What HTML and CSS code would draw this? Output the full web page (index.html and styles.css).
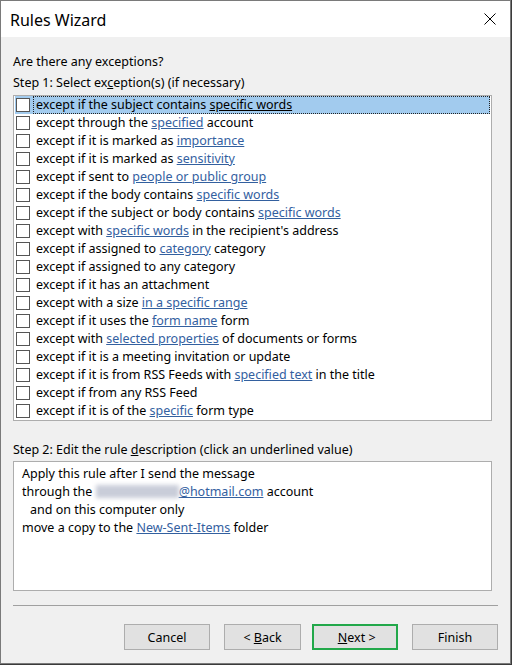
FILE: index.html
```html
<!DOCTYPE html>
<html lang="en">
<head>
    <meta charset="UTF-8">
    <title>Rules Wizard</title>
    <link rel="stylesheet" href="styles.css">
</head>
<body>
    <div class="window">
        <div class="titlebar">
            <span class="title">Rules Wizard</span>
            <svg class="close" width="12" height="12" viewBox="0 0 12 12">
                <path d="M0.5 0.5 L11.5 11.5 M11.5 0.5 L0.5 11.5" stroke="#000" stroke-width="1" fill="none"/>
            </svg>
        </div>

        <div class="content">
            <div class="line">Are there any exceptions?</div>
            <div class="line step">Step 1: Select ex<u>c</u>eption(s) (if necessary)</div>

            <div class="list">
                <div class="row selected"><span class="check"></span><span class="text">except if the subject contains <a>specific words</a></span></div>
                <div class="row"><span class="check"></span><span class="text">except through the <a>specified</a> account</span></div>
                <div class="row"><span class="check"></span><span class="text">except if it is marked as <a>importance</a></span></div>
                <div class="row"><span class="check"></span><span class="text">except if it is marked as <a>sensitivity</a></span></div>
                <div class="row"><span class="check"></span><span class="text">except if sent to <a>people or public group</a></span></div>
                <div class="row"><span class="check"></span><span class="text">except if the body contains <a>specific words</a></span></div>
                <div class="row"><span class="check"></span><span class="text">except if the subject or body contains <a>specific words</a></span></div>
                <div class="row"><span class="check"></span><span class="text">except with <a>specific words</a> in the recipient's address</span></div>
                <div class="row"><span class="check"></span><span class="text">except if assigned to <a>category</a> category</span></div>
                <div class="row"><span class="check"></span><span class="text">except if assigned to any category</span></div>
                <div class="row"><span class="check"></span><span class="text">except if it has an attachment</span></div>
                <div class="row"><span class="check"></span><span class="text">except with a size <a>in a specific range</a></span></div>
                <div class="row"><span class="check"></span><span class="text">except if it uses the <a>form name</a> form</span></div>
                <div class="row"><span class="check"></span><span class="text">except with <a>selected properties</a> of documents or forms</span></div>
                <div class="row"><span class="check"></span><span class="text">except if it is a meeting invitation or update</span></div>
                <div class="row"><span class="check"></span><span class="text">except if it is from RSS Feeds with <a>specified text</a> in the title</span></div>
                <div class="row"><span class="check"></span><span class="text">except if from any RSS Feed</span></div>
                <div class="row"><span class="check"></span><span class="text">except if it is of the <a>specific</a> form type</span></div>
            </div>

            <div class="line step2">Step 2: Edit the rule <u>d</u>escription (click an underlined value)</div>

            <div class="desc">
                <div>Apply this rule after I send the message</div>
                <div>through the <span class="blur"></span><a>@hotmail.com</a> account</div>
                <div class="indent">and on this computer only</div>
                <div>move a copy to the <a>New-Sent-Items</a> folder</div>
            </div>

            <div class="separator"></div>

            <div class="buttons">
                <button class="btn cancel">Cancel</button>
                <button class="btn back">&lt; <u>B</u>ack</button>
                <button class="btn next">&nbsp;<u>N</u>ext &gt;</button>
                <button class="btn finish">Finish</button>
            </div>
        </div>
    </div>
</body>
</html>
```

FILE: styles.css
```css
* {
    margin: 0;
    padding: 0;
    box-sizing: border-box;
}

body {
    background: #3b3b3b;
    font-family: "Noto Sans", "Open Sans", sans-serif;
    font-size: 12.5px;
    color: #000;
    width: 512px;
    height: 665px;
    overflow: hidden;
}

.window {
    width: 511px;
    height: 664px;
    border: 1px solid #7a7a7a;
    background: #f0f0f0;
    display: flex;
    flex-direction: column;
}

.titlebar {
    height: 36px;
    background: #fff;
    display: flex;
    align-items: center;
    justify-content: space-between;
    padding: 0 14px 0 9px;
}

.title {
    font-size: 16px;
    line-height: 20px;
    margin-top: 1px;
}

.close {
    display: block;
}

.content {
    padding: 16px 0 0 12px;
}

.line {
    line-height: 18px;
    white-space: nowrap;
}

.step {
    margin-top: 3px;
}

.list {
    margin-top: 3px;
    width: 479px;
    border: 1px solid #adadad;
    background: #fff;
}

.row {
    height: 18px;
    display: flex;
    align-items: center;
    margin-left: 1px;
    margin-right: 1px;
    white-space: nowrap;
}

.row.selected {
    background: #a2cbee;
}

.check {
    width: 14px;
    height: 14px;
    margin-left: 1px;
    border: 1px solid #555;
    background: #fff;
    flex: none;
}

.text {
    margin-left: 3px;
    padding-left: 2px;
    height: 18px;
    flex: 1;
    border: 1px dotted transparent;
    line-height: 16px;
}

.row.selected .text {
    border-color: #222;
}

a {
    color: #33609f;
    text-decoration: underline;
}

.row.selected a {
    color: #000;
}

.step2 {
    margin-top: 20px;
}

.desc {
    margin-top: 2px;
    width: 479px;
    height: 130px;
    border: 1px solid #adadad;
    background: #fff;
    padding: 3px 0 0 8px;
    line-height: 18px;
    white-space: nowrap;
}

.indent {
    padding-left: 8px;
}

.blur {
    display: inline-block;
    width: 83px;
    height: 13px;
    vertical-align: -2px;
    background: #c9cdd9;
    filter: blur(2px);
}

.separator {
    margin-top: 14px;
    width: 485px;
    height: 1px;
    background: #a0a0a0;
}

.buttons {
    margin-top: 18px;
    display: flex;
    padding-left: 111px;
}

.btn {
    height: 26px;
    width: 86px;
    background: #e1e1e1;
    border: 1px solid #adadad;
    font-family: inherit;
    font-size: 12.5px;
    color: #000;
}

.back {
    margin-left: 14px;
    width: 77px;
}

.next {
    margin-left: 11px;
    border: 2px solid #22a84a;
}

.finish {
    margin-left: 14px;
}
```
